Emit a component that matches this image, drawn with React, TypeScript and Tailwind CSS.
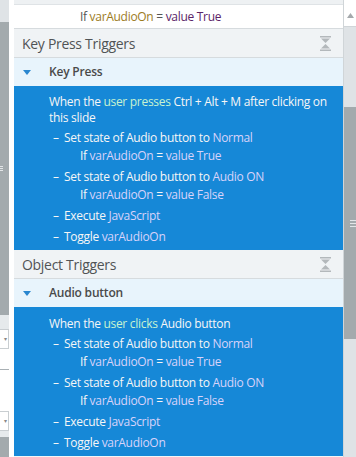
import React from "react";

const font = { fontFamily: '"Open Sans", "Liberation Sans", sans-serif' };

const Collapse = () => (
  <svg width="11" height="15" viewBox="0 0 11 15" className="block">
    <rect x="0" y="0" width="11" height="1.5" fill="#b3b8bb" />
    <polygon points="1,2.5 10,2.5 5.5,7" fill="#b3b8bb" />
    <polygon points="1,12.5 10,12.5 5.5,8" fill="#b3b8bb" />
    <rect x="0" y="13.5" width="11" height="1.5" fill="#b3b8bb" />
  </svg>
);

const Down = () => (
  <svg width="8" height="5" viewBox="0 0 8 5" className="block">
    <polygon points="0,0 8,0 4,5" fill="#2a86cf" />
  </svg>
);

const Lav = ({ children }: { children: React.ReactNode }) => (
  <span className="text-[#d8d3fa]">{children}</span>
);

interface Action {
  head: React.ReactNode;
  cond?: React.ReactNode;
}

const ifLine = (v: string) => (
  <>
    If <Lav>varAudioOn</Lav> = <Lav>value {v}</Lav>
  </>
);

const actions: Action[] = [
  {
    head: (
      <>
        Set state of Audio button to <Lav>Normal</Lav>
      </>
    ),
    cond: ifLine("True"),
  },
  {
    head: (
      <>
        Set state of Audio button to <Lav>Audio ON</Lav>
      </>
    ),
    cond: ifLine("False"),
  },
  {
    head: (
      <>
        Execute <Lav>JavaScript</Lav>
      </>
    ),
  },
  {
    head: (
      <>
        Toggle <Lav>varAudioOn</Lav>
      </>
    ),
  },
];

const Section = ({
  title,
  row,
  when,
  top,
}: {
  title: string;
  row: string;
  when: React.ReactNode;
  top: string;
}) => (
  <div>
    <div className="h-[29px] bg-[#f0f3f5] border-b border-[#d6dbde] flex items-center justify-between pl-[8px] pr-[12px]">
      <span className="text-[14px] tracking-[-0.3px] text-[#505456]">{title}</span>
      <Collapse />
    </div>
    <div className="h-[28px] bg-[#e8f4fc] flex items-center">
      <div className="w-[35px] pl-[9px]">
        <Down />
      </div>
      <span className="text-[12px] font-semibold tracking-[-0.2px] text-[#4a4a4a]">{row}</span>
    </div>
    <div className={`bg-[#1688d7] text-[12px] tracking-[-0.3px] text-[#f6f6f6] pb-[4px] ${top}`}>
      <p className="pl-[35px] pr-[6px] leading-[16px]">{when}</p>
      {actions.map((a, i) => (
        <div key={i} className="mt-[3px] leading-[18px]">
          <div className="flex">
            <span className="w-[50px] pl-[39px]">–</span>
            <span>{a.head}</span>
          </div>
          {a.cond && <div className="pl-[66px]">{a.cond}</div>}
        </div>
      ))}
    </div>
  </div>
);

export default function App() {
  return (
    <div className="w-[356px] h-[457px] overflow-hidden flex bg-[#f3f5f6]" style={font}>
      {/* left pane edge */}
      <div className="w-[9px] flex flex-col shrink-0">
        <div className="h-[22px] bg-[#dfe3e6]" />
        <div className="h-[293px] bg-[#a3aaad] flex flex-col justify-center">
          <div className="h-[1px] w-[3px] bg-[#e3e6e8] mb-[1px]" />
          <div className="h-[1px] w-[3px] bg-[#e3e6e8] mb-[1px]" />
          <div className="h-[1px] w-[3px] bg-[#e3e6e8]" />
        </div>
        <div className="h-[14px] bg-[#e6eaec]" />
        <div className="h-[20px] bg-white border border-l-0 border-[#c9ced1] flex items-center justify-end pr-[1px] text-[6px] text-[#888]">▾</div>
        <div className="h-[21px] bg-white border-b border-[#a9b0b4]" />
        <div className="h-[41px] bg-white" />
        <div className="h-[20px] bg-white border border-l-0 border-[#c9ced1] flex items-center justify-end pr-[1px] text-[6px] text-[#888]">▾</div>
        <div className="h-[6px] bg-[#e6eaec]" />
        <div className="flex-1 bg-[#a3aaad]" />
      </div>
      <div className="w-[5px] bg-white shrink-0" />

      {/* triggers panel */}
      <div className="w-[329px] shrink-0 flex flex-col">
        <div className="h-[5px] bg-[#eef1f3] border-b border-[#dfe3e6]" />
        <div className="h-[24px] bg-white border-b border-[#d6dbde] flex items-center pl-[66px] text-[12px] tracking-[-0.3px] text-[#555]">
          If&nbsp;<span className="text-[#9c7b1e]">varAudioOn</span>&nbsp;=&nbsp;
          <span className="text-[#5b2468]">value True</span>
        </div>
        <Section
          title="Key Press Triggers"
          row="Key Press"
          top="pt-[8px]"
          when={
            <>
              When the <span className="text-[#c8f3d0]">user presses</span> Ctrl + Alt + M after clicking on this slide
            </>
          }
        />
        <Section
          title="Object Triggers"
          row="Audio button"
          top="pt-[9px]"
          when={
            <>
              When the <span className="text-[#c8f3d0]">user clicks</span> Audio button
            </>
          }
        />
      </div>

      {/* scrollbar */}
      <div className="w-[13px] shrink-0 flex flex-col border-l border-[#d0d5d8]">
        <div className="h-[5px] bg-white" />
        <div className="h-[22px] bg-white border-b border-[#d0d5d8] flex items-center justify-center">
          <svg width="7" height="5" viewBox="0 0 7 5" className="block">
            <polygon points="0,5 7,5 3.5,0" fill="#a5a9ac" />
          </svg>
        </div>
        <div className="h-[80px] bg-[#dfe3e6]" />
        <div className="h-[232px] bg-[#a3aaad] flex flex-col justify-center items-end">
          <div className="h-[1px] w-[6px] bg-[#e3e6e8] mb-[2px]" />
          <div className="h-[1px] w-[6px] bg-[#e3e6e8] mb-[2px]" />
          <div className="h-[1px] w-[6px] bg-[#e3e6e8]" />
        </div>
        <div className="flex-1 bg-[#dfe3e6]" />
      </div>
    </div>
  );
}
